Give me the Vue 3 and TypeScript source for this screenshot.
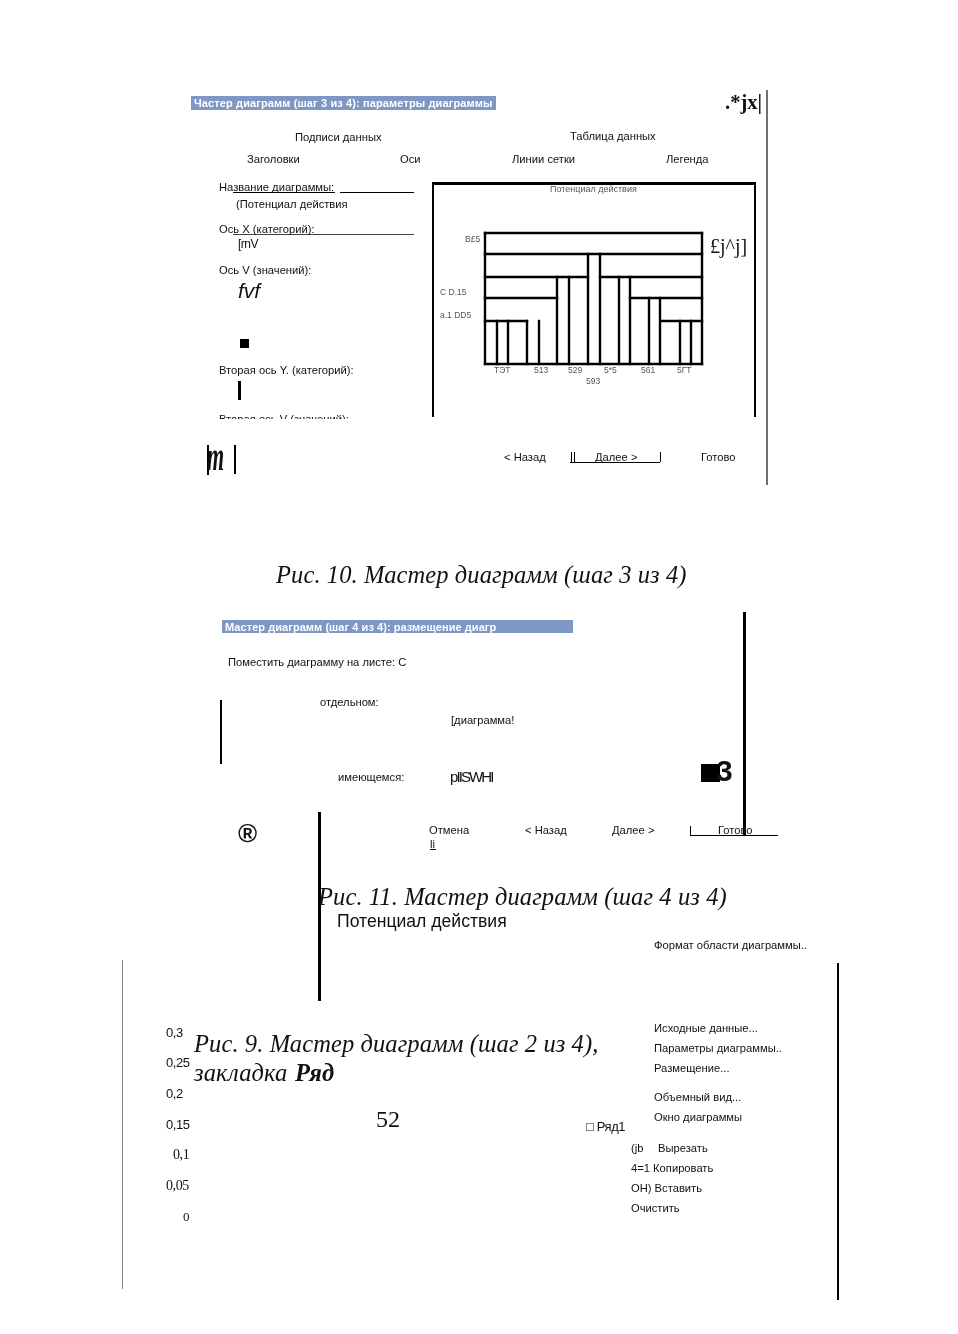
<script setup lang="ts">
// Scanned page: every mark sits at its own place on the sheet, so it is all data
interface Mark {
  s: string;
  x: number;
  y: number; // vertical centre of the text
  size?: number;
  font?: 'sans' | 'serif';
  italic?: boolean;
  bold?: boolean;
  color?: string;
  ls?: number;
  clip?: number;
  sx?: number;
}

interface Rule {
  x: number;
  y: number;
  w: number;
  h: number;
  color?: string;
}

const SANS = '"Liberation Sans", Arial, sans-serif';
const SERIF = '"Liberation Serif", "Times New Roman", serif';

const marks: Mark[] = [
  // step 3
  { s: 'Частер диаграмм (шаг 3 из 4): параметры диаграммы', x: 194, y: 103, size: 11, color: '#fff', bold: true, ls: 0.12 },
  { s: '.*jx|', x: 725, y: 102, size: 20.5, font: 'serif', bold: true },
  { s: 'Подписи данных', x: 295, y: 137 },
  { s: 'Таблица данных', x: 570, y: 136 },
  { s: 'Заголовки', x: 247, y: 159 },
  { s: 'Оси', x: 400, y: 159 },
  { s: 'Линии сетки', x: 512, y: 159 },
  { s: 'Легенда', x: 666, y: 159 },
  { s: 'Название диаграммы:', x: 219, y: 187 },
  { s: '(Потенциал действия', x: 236, y: 204 },
  { s: 'Ось X (категорий):', x: 219, y: 229 },
  { s: '[rnV', x: 238, y: 244, size: 12, ls: -0.5 },
  { s: 'Ось V (значений):', x: 219, y: 270 },
  { s: 'fvf', x: 238, y: 290, size: 21, italic: true },
  { s: 'Вторая ось Y. (категорий):', x: 219, y: 370 },
  { s: 'Вторая ось V (значений):', x: 219, y: 419, clip: 5 },
  { s: 'm', x: 207, y: 457, size: 40, font: 'serif', italic: true, bold: true, sx: 0.55 },
  { s: 'Потенциал действия', x: 550, y: 189, size: 9, color: '#555' },
  { s: 'B£5', x: 465, y: 239, size: 8.5, color: '#555' },
  { s: 'C D.15', x: 440, y: 292, size: 8.5, color: '#555' },
  { s: 'а.1 DD5', x: 440, y: 315, size: 8.5, color: '#555' },
  { s: '£j^j]', x: 710, y: 246, size: 20, font: 'serif' },
  { s: 'ТЭТ', x: 494, y: 370, size: 8.5, color: '#555' },
  { s: '513', x: 534, y: 370, size: 8.5, color: '#555' },
  { s: '529', x: 568, y: 370, size: 8.5, color: '#555' },
  { s: '5*5', x: 604, y: 370, size: 8.5, color: '#555' },
  { s: '561', x: 641, y: 370, size: 8.5, color: '#555' },
  { s: '5ГТ', x: 677, y: 370, size: 8.5, color: '#555' },
  { s: '593', x: 586, y: 381, size: 8.5, color: '#555' },
  { s: '< Назад', x: 504, y: 457 },
  { s: 'Далее >', x: 595, y: 457 },
  { s: 'Готово', x: 701, y: 457 },
  { s: 'Рис. 10. Мастер диаграмм (шаг 3 из 4)', x: 276, y: 575, size: 24.5, font: 'serif', italic: true, ls: 0.1 },

  // step 4
  { s: 'Мастер диаграмм (шаг 4 из 4): размещение диагр', x: 225, y: 627, size: 11, color: '#fff', bold: true, ls: 0.06 },
  { s: 'Поместить диаграмму на листе: С', x: 228, y: 662 },
  { s: 'отдельном:', x: 320, y: 702 },
  { s: '[диаграмма!', x: 451, y: 720 },
  { s: 'имеющемся:', x: 338, y: 777 },
  { s: 'pIISWHI', x: 450, y: 776, size: 15, ls: -1.9 },
  { s: '3', x: 716, y: 771, size: 30, bold: true },
  { s: '®', x: 238, y: 833, size: 26, bold: true },
  { s: 'Отмена', x: 429, y: 830 },
  { s: 'li', x: 430, y: 844 },
  { s: '< Назад', x: 525, y: 830 },
  { s: 'Далее >', x: 612, y: 830 },
  { s: 'Готово', x: 718, y: 830 },
  { s: 'Рис. 11. Мастер диаграмм (шаг 4 из 4)', x: 318, y: 897, size: 24.5, font: 'serif', italic: true, ls: 0.1 },
  { s: 'Потенциал действия', x: 337, y: 921, size: 17.6 },

  // step 2, context menu and the axis left over in the scan
  { s: 'Формат области диаграммы..', x: 654, y: 945 },
  { s: '0,3', x: 166, y: 1032, size: 13, ls: -0.4 },
  { s: '0,25', x: 166, y: 1062, size: 13, ls: -0.4 },
  { s: '0,2', x: 166, y: 1093, size: 13, ls: -0.4 },
  { s: '0,15', x: 166, y: 1124, size: 13, ls: -0.4 },
  { s: '0,1', x: 173, y: 1155, size: 14, font: 'serif', ls: -0.4 },
  { s: '0,05', x: 166, y: 1186, size: 14, font: 'serif', ls: -0.4 },
  { s: '0', x: 183, y: 1216, size: 13, font: 'serif' },
  { s: 'Рис. 9. Мастер диаграмм (шаг 2 из 4),', x: 194, y: 1044, size: 24.5, font: 'serif', italic: true, ls: 0.1 },
  { s: 'закладка', x: 194, y: 1073, size: 24.5, font: 'serif', italic: true, ls: 0.1 },
  { s: 'Ряд', x: 295, y: 1073, size: 24.5, font: 'serif', italic: true, bold: true },
  { s: '52', x: 376, y: 1119, size: 24, font: 'serif' },
  { s: 'Исходные данные...', x: 654, y: 1028 },
  { s: 'Параметры диаграммы..', x: 654, y: 1048 },
  { s: 'Размещение...', x: 654, y: 1068 },
  { s: 'Объемный вид...', x: 654, y: 1097 },
  { s: 'Окно диаграммы', x: 654, y: 1117 },
  { s: '□ Ряд1', x: 586, y: 1126, size: 13, ls: -0.4 },
  { s: '(jb', x: 631, y: 1148 },
  { s: 'Вырезать', x: 658, y: 1148 },
  { s: '4=1 Копировать', x: 631, y: 1168 },
  { s: 'ОН) Вставить', x: 631, y: 1188 },
  { s: 'Очистить', x: 631, y: 1208 },
];

const GREY = '#6f6f6f';

const rules: Rule[] = [
  // step 3 window
  { x: 191, y: 96, w: 305, h: 14, color: '#7f97c5' },
  { x: 766, y: 90, w: 2, h: 395, color: GREY },
  { x: 233, y: 192, w: 102, h: 1 },
  { x: 340, y: 192, w: 74, h: 1 },
  { x: 233, y: 234, w: 181, h: 1, color: '#444' },
  { x: 240, y: 339, w: 9, h: 9 },
  { x: 238, y: 381, w: 3, h: 19 },
  { x: 207, y: 445, w: 2, h: 30 },
  { x: 234, y: 445, w: 2, h: 29 },
  { x: 570, y: 462, w: 90, h: 1 },
  { x: 571, y: 452, w: 1, h: 10 },
  { x: 574, y: 452, w: 1, h: 10 },
  { x: 660, y: 452, w: 1, h: 10 },
  // preview frame
  { x: 432, y: 182, w: 323, h: 3 },
  { x: 432, y: 182, w: 2, h: 235 },
  { x: 754, y: 182, w: 2, h: 235 },
  // step 4 window
  { x: 222, y: 620, w: 351, h: 13, color: '#7f97c5' },
  { x: 743, y: 612, w: 3, h: 224 },
  { x: 220, y: 700, w: 2, h: 64 },
  { x: 701, y: 764, w: 19, h: 18 },
  { x: 318, y: 812, w: 3, h: 189 },
  { x: 690, y: 835, w: 88, h: 1 },
  { x: 690, y: 826, w: 1, h: 9 },
  { x: 430, y: 849, w: 6, h: 1 },
  // page edges
  { x: 122, y: 960, w: 1, h: 329, color: '#888' },
  { x: 837, y: 963, w: 2, h: 337 },
];

// Plot outline as the scan left it: [x1, y1, x2, y2]
const plot: [number, number, number, number][] = [
  [485, 233, 702, 233],
  [702, 233, 702, 364],
  [485, 364, 702, 364],
  [485, 233, 485, 364],
  [485, 254, 702, 254],
  [485, 277, 588, 277],
  [600, 277, 702, 277],
  [485, 298, 557, 298],
  [630, 298, 702, 298],
  [485, 321, 527, 321],
  [661, 321, 702, 321],
  [497, 321, 497, 364],
  [508, 321, 508, 364],
  [527, 321, 527, 364],
  [539, 321, 539, 364],
  [557, 277, 557, 364],
  [569, 277, 569, 364],
  [588, 254, 588, 364],
  [600, 254, 600, 364],
  [619, 277, 619, 364],
  [630, 277, 630, 364],
  [649, 298, 649, 364],
  [660, 298, 660, 364],
  [680, 321, 680, 364],
  [691, 321, 691, 364],
];

const markStyle = (m: Mark) => {
  const size = m.size ?? 11.2;
  return {
    left: `${m.x}px`,
    top: `${Math.ceil(m.y - size / 2)}px`,
    fontSize: `${size}px`,
    fontFamily: m.font === 'serif' ? SERIF : SANS,
    fontStyle: m.italic ? 'italic' : 'normal',
    fontWeight: m.bold ? 700 : 400,
    color: m.color ?? '#111',
    letterSpacing: m.ls ? `${m.ls}px` : undefined,
    height: m.clip ? `${m.clip}px` : undefined,
    overflow: m.clip ? 'hidden' : undefined,
    transform: m.sx ? `scaleX(${m.sx})` : undefined,
  };
};

const ruleStyle = (r: Rule) => ({
  left: `${r.x}px`,
  top: `${r.y}px`,
  width: `${r.w}px`,
  height: `${r.h}px`,
  background: r.color ?? '#000',
});
</script>

<template>
  <div class="sheet">
    <i v-for="(r, i) in rules" :key="'r' + i" class="rule" :style="ruleStyle(r)"></i>
    <svg class="plot" width="958" height="1334" viewBox="0 0 958 1334">
      <line
        v-for="(l, i) in plot"
        :key="i"
        :x1="l[0]"
        :y1="l[1]"
        :x2="l[2]"
        :y2="l[3]"
        stroke="#000"
        stroke-width="2.4"
        stroke-linecap="square"
      />
    </svg>
    <span v-for="(m, i) in marks" :key="'m' + i" class="mark" :style="markStyle(m)">{{ m.s }}</span>
  </div>
</template>

<style scoped>
.sheet {
  position: relative;
  width: 958px;
  height: 1334px;
  background: #fff;
  overflow: hidden;
  filter: blur(0.3px);
}

.rule {
  position: absolute;
  display: block;
}

.plot {
  position: absolute;
  left: 0;
  top: 0;
}

.mark {
  position: absolute;
  display: block;
  line-height: 1;
  white-space: pre;
  transform-origin: left center;
}
</style>
